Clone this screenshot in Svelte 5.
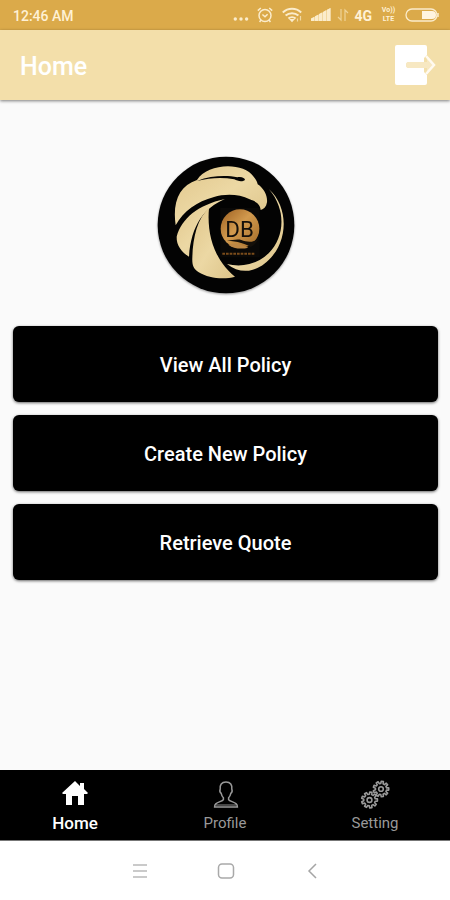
<script>
  const actions = ['View All Policy', 'Create New Policy', 'Retrieve Quote'];
  const tabs = ['Home', 'Profile', 'Setting'];
  let current = $state('Home');

  function gear(cx, cy, outer, inner, teeth) {
    const points = [];
    const step = (Math.PI * 2) / teeth;
    for (let i = 0; i < teeth; i++) {
      for (const [offset, radius] of [[-0.3, inner], [-0.2, outer], [0.2, outer], [0.3, inner]]) {
        const angle = (i + offset) * step;
        points.push(`${(cx + radius * Math.cos(angle)).toFixed(2)},${(cy + radius * Math.sin(angle)).toFixed(2)}`);
      }
    }
    return points.join(' ');
  }
</script>

<div class="screen">
  <div class="status">
    <span class="time">12:46 AM</span>
    <div class="signals">
      <svg width="16" height="16" viewBox="0 0 16 16" aria-hidden="true">
        <g fill="#fbeccb"><circle cx="2.3" cy="12" r="1.7" /><circle cx="8" cy="12" r="1.7" /><circle cx="13.6" cy="12" r="1.7" /></g>
      </svg>
      <svg class="alarm" width="16" height="16" viewBox="0 0 16 16" fill="none" stroke="#fbeccb" stroke-width="1.5" aria-hidden="true">
        <circle cx="8" cy="8.5" r="6" /><path d="M5.4 7.5 8 9.8l2.6-2.6M.8 3.6 3.8 1M12.2 1l3 2.6M4 13l-1.4 2M12 13l1.4 2" />
      </svg>
      <svg class="wifi" width="21" height="16" viewBox="0 0 21 16" fill="none" stroke="#fbeccb" stroke-width="2" aria-hidden="true">
        <path d="M.8 5.4C6 .6 14 .6 19.2 5.4M3.6 8.6c3.6-3.3 9.2-3.3 12.8 0M6.4 11.6c2-1.8 5.2-1.8 7.2 0" />
        <path d="m7 12 3 3.3 3-3.3z" fill="#fbeccb" stroke="none" /><path d="M15.5 14.5v-3M18.5 9v4.5" stroke-width="1.2" opacity=".7" />
      </svg>
      <svg class="cell" width="20" height="16" viewBox="0 0 20 16" aria-hidden="true">
        <path d="M0 14v-2.3L19.5 1v13z" fill="#f2d79f" />
        <path d="M0 14v-2.5l3-1.6V14zM4 14V9.3l3-1.6V14zM8 14V7.1l3-1.7V14zM12 14V4.9l3-1.7V14zM16 14V2.7L19.5 1v13z" fill="#fbeccb" />
      </svg>
      <svg class="data" width="12" height="16" viewBox="0 0 12 16" fill="none" stroke="#efd397" stroke-width="1.2" aria-hidden="true">
        <path d="M4 2v11L1 10M8 14V3l3 3" />
      </svg>
      <span class="network">4G</span>
      <span class="volte"><span>Vo))</span><span>LTE</span></span>
      <svg width="34" height="14" viewBox="0 0 34 14" aria-hidden="true">
        <rect x="1" y="1" width="31" height="12" rx="6" fill="none" stroke="#fbeccb" stroke-width="1.3" />
        <path d="M17 3h10a4 4 0 0 1 0 8H17z" fill="#fff4df" /><path d="M33 5v4" stroke="#fbeccb" stroke-width="1.5" />
      </svg>
    </div>
  </div>

  <header>
    <h1>Home</h1>
    <button class="logout" aria-label="Log out">
      <svg width="42" height="42" viewBox="0 0 42 42" aria-hidden="true">
        <path d="M3 1h28a2 2 0 0 1 2 2v8l-3 3v4H15a3 3 0 0 0 0 6h15v4l3 3v8a2 2 0 0 1-2 2H3a2 2 0 0 1-2-2V3a2 2 0 0 1 2-2z" fill="#fff" />
        <path d="M15 18h18v-5l8 8-8 8v-5H15a3 3 0 0 1 0-6z" fill="#f7e8c2" />
        <path d="m32 12 8 9-8 9" fill="none" stroke="#fffaf0" stroke-width="2.5" />
      </svg>
    </button>
  </header>

  <main>
    <svg class="logo" viewBox="31 31 420 420" role="img" aria-label="DB logo">
      <defs>
        <linearGradient id="gold" x1="0" y1="0" x2="1" y2="1">
          <stop offset="0" stop-color="#e0c68b" /><stop offset=".5" stop-color="#ecd8a4" /><stop offset="1" stop-color="#dcc388" />
        </linearGradient>
        <linearGradient id="amber" x1="0" y1="0" x2="1" y2="1">
          <stop offset="0" stop-color="#9c5f20" /><stop offset=".45" stop-color="#d29a4e" /><stop offset="1" stop-color="#a26a27" />
        </linearGradient>
      </defs>
      <circle cx="241" cy="241" r="205" fill="#030303" />
      <g fill="url(#gold)">
        <path d="M90 242C80 172 100 124 154 106C184 56 292 50 324 96C332 106 335 113 336 119C356 132 366 155 364 173C362 186 355 194 345 196C344 178 330 170 312 164C280 147 235 148 205 157C154 170 113 200 90 242z" />
        <path d="M93 276C108 222 155 181 238 163C176 189 137 240 130 336C108 322 92 302 93 276z" />
        <path d="M190 190C183 267 204 344 268 396C236 405 190 402 158 382C142 372 139 359 140 338C142 275 156 220 190 190z" />
        <path d="M370 134C430 188 428 291 369 346C334 381 286 392 244 358C283 368 332 362 369 326C418 277 422 194 370 134z" />
      </g>
      <path d="M154 109C198 92 244 92 275 98C287 95 298 100 298 106C289 113 275 109 266 104C230 97 193 99 154 109z" fill="#050404" />
      <path d="M224 190h118v148H224z" fill="#090807" />
      <circle cx="283" cy="252" r="58" fill="url(#amber)" />
      <path d="M234 287c23 2 38-5 53-1 15 5 32 10 52-4-7 13-15 20-24 25-25-14-51-18-81-20z" fill="#15100a" />
      <path d="M248 300c22-7 40-1 60 9-23 6-46 2-60-9z" fill="#bd8745" />
      <text x="239" y="276" class="mark">DB</text>
      <path d="M230 327h97" stroke="#7b4c1b" stroke-width="6" stroke-dasharray="8 3" />
    </svg>
    <div class="actions">
      {#each actions as label}
        <button>{label}</button>
      {/each}
    </div>
  </main>

  <nav class="tabs">
    {#each tabs as tab}
      <button class:active={current === tab} onclick={() => (current = tab)}>
        {#if tab === 'Home'}
          <svg width="30" height="30" viewBox="0 0 30 30" fill="currentColor" aria-hidden="true">
            <path d="M15 2 2 14l1 1h3v11h6v-9h6v9h6V15h3l1-1-4-4V4h-4v3z" />
          </svg>
        {:else if tab === 'Profile'}
          <svg width="30" height="30" viewBox="0 0 30 30" fill="none" stroke="currentColor" stroke-width="1.5" aria-hidden="true">
            <path d="M16 3c-4.5 0-6.3 3-5.8 7-.8 2 0 3.6 1 4.4.4 2 1.1 3.3 2.2 4.4v1.8c-1 1.7-5.3 2.2-7.6 4.3-1 .9-1.2 2-1.2 3.1h22.8c0-1.1-.2-2.2-1.2-3.1-2.3-2.1-6.6-2.6-7.6-4.3v-1.8c1.1-1.1 1.8-2.4 2.2-4.4 1-.8 1.8-2.4 1-4.4.5-4-1.3-7-5.8-7z" />
            <path d="M6 26h20" opacity=".6" />
          </svg>
        {:else}
          <svg width="30" height="30" viewBox="0 0 30 30" fill="none" stroke="currentColor" stroke-width="1.6" stroke-linejoin="round" aria-hidden="true">
            <polygon points={gear(9.5, 21, 8, 5.8, 9)} /><circle cx="9.5" cy="21" r="2.4" />
            <polygon points={gear(21, 10, 7.8, 5.6, 9)} /><circle cx="21" cy="10" r="2.3" />
          </svg>
        {/if}
        <span>{tab}</span>
      </button>
    {/each}
  </nav>

  <div class="system">
    <button aria-label="Recent apps">
      <svg width="20" height="20" viewBox="0 0 20 20" stroke="#b9b9b9" stroke-width="1.6" aria-hidden="true"><path d="M3 4h14M3 10h14M3 16h14" /></svg>
    </button>
    <button aria-label="Home screen">
      <svg width="20" height="20" viewBox="0 0 20 20" fill="none" stroke="#a9a9a9" stroke-width="1.5" aria-hidden="true"><rect x="2.5" y="3" width="15" height="14" rx="3.5" /></svg>
    </button>
    <button aria-label="Back">
      <svg width="20" height="20" viewBox="0 0 20 20" fill="none" stroke="#a5a5a5" stroke-width="1.5" aria-hidden="true"><path d="m14 3-7 7 7 7" /></svg>
    </button>
  </div>
</div>

<style>
  :global(body) { margin: 0; }
  .screen {
    display: flex;
    flex-direction: column;
    min-height: 100vh;
    background: #fafafa;
    font-family: Roboto, "Liberation Sans", sans-serif;
  }
  button { border: 0; padding: 0; font: inherit; cursor: pointer; }
  svg { display: block; flex: none; }
  .status {
    display: flex;
    align-items: center;
    justify-content: space-between;
    height: 30px;
    padding: 0 11px 0 13px;
    background: #dbaa4a;
    color: #fff1d5;
  }
  .time { font-size: 14px; font-weight: 500; line-height: 30px; padding-top: 2px; }
  .signals { display: flex; align-items: center; }
  .alarm { margin-left: 8px; }
  .wifi { margin-left: 9px; }
  .cell { margin-left: 8px; }
  .data { margin-left: 6px; }
  .network { margin: 2px 8px 0 5px; font-size: 14px; font-weight: 700; }
  .volte { display: flex; flex-direction: column; align-items: center; width: 17px; margin-right: 8px; font-size: 7px; font-weight: 700; line-height: 9px; }
  header {
    position: relative;
    display: flex;
    align-items: center;
    justify-content: space-between;
    height: 70px;
    padding: 0 14px 0 20px;
    background: #f3dfaa;
    box-shadow: 0 1px 3px rgba(0, 0, 0, .5);
  }
  h1 { margin: 0; padding-top: 4px; color: #fff; font-size: 25px; font-weight: 500; line-height: 32px; }
  .logout { background: none; }
  main { flex: 1; display: flex; flex-direction: column; align-items: center; padding: 55px 12px 24px 13px; }
  .logo { width: 140px; height: 140px; filter: drop-shadow(0 1px 1px rgba(0, 0, 0, .4)); }
  .mark { font-family: Roboto, "Liberation Sans", sans-serif; font-size: 67px; font-weight: 400; fill: #15100b; }
  .actions { display: flex; flex-direction: column; gap: 13px; align-self: stretch; margin-top: 31px; }
  .actions button {
    height: 76px;
    padding-top: 2px;
    border-radius: 6px;
    background: #000;
    color: #fff;
    font-size: 20px;
    font-weight: 500;
    box-shadow: 0 1px 3px rgba(0, 0, 0, .6);
  }
  .tabs { display: flex; height: 70px; background: #000; }
  .tabs button {
    flex: 1;
    display: flex;
    flex-direction: column;
    align-items: center;
    padding-top: 9px;
    background: none;
    color: #999;
    font-size: 15px;
    line-height: 20px;
  }
  .tabs span { margin-top: 4px; }
  .tabs .active { color: #fff; font-size: 17px; font-weight: 500; }
  .system { display: flex; align-items: center; justify-content: center; gap: 66px; height: 60px; padding-left: 2px; background: #fff; border-top: 1px solid #777; box-sizing: border-box; }
  .system button { background: none; }
</style>
